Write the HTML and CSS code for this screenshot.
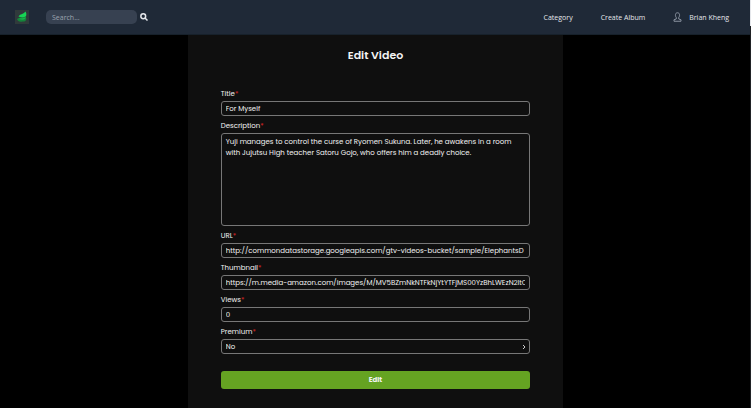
FILE: index.html
```html
<!DOCTYPE html>
<html lang="en">
<head>
<meta charset="utf-8">
<title>Edit Video</title>
<link rel="stylesheet" href="styles.css">
</head>
<body>
<header class="navbar">
  <a class="logo" href="#" aria-label="Home">
    <svg viewBox="0 0 28 28" aria-hidden="true">
      <rect width="28" height="28" fill="#303a3b"/>
      <path d="M7 13C10 8 16 9 21 3C24 8 23 14 18 15C13 16 10 14 7 13Z" fill="#16d655"/>
      <path d="M4 19C8 13 14 17 21 13C25 19 21 24 15 23C9 25 6 22 4 19Z" fill="#14853b"/>
      <path d="M8 18C12 15 17 18 21 14C22 19 16 21 8 18Z" fill="#19b34a"/>
    </svg>
  </a>
  <form class="search">
    <input class="search-input" type="search" placeholder="Search..." aria-label="Search">
    <button class="search-button" type="button" aria-label="Search">
      <svg viewBox="0 0 16 16" aria-hidden="true"><circle cx="6.5" cy="6.5" r="4.8"/><path d="M10 10L15 15"/></svg>
    </button>
  </form>
  <nav class="links">
    <a href="#">Category</a>
    <a href="#">Create Album</a>
    <a class="user" href="#">
      <svg viewBox="0 0 18 20" aria-hidden="true"><path d="M6.500 11C4 8 4 1.500 9 1.500S14 8 11.500 11V14L16 15.500V18.500H2V15.500L6.500 14Z"/></svg>
      Brian Kheng
    </a>
  </nav>
</header>
<main class="panel">
  <h1>Edit Video</h1>
  <form class="form">
    <label for="title">Title<span>*</span></label>
    <input id="title" type="text" value="For Myself">
    <label for="description">Description<span>*</span></label>
    <textarea id="description">Yuji manages to control the curse of Ryomen Sukuna. Later, he awakens in a room with Jujutsu High teacher Satoru Gojo, who offers him a deadly choice.</textarea>
    <label for="url">URL<span>*</span></label>
    <input id="url" type="text" value="http://commondatastorage.googleapis.com/gtv-videos-bucket/sample/ElephantsD">
    <label for="thumbnail">Thumbnail<span>*</span></label>
    <input id="thumbnail" type="text" value="https://m.media-amazon.com/images/M/MV5BZmNkNTFkNjYtYTFjMS00YzBhLWEzN2ItOG">
    <label for="views">Views<span>*</span></label>
    <input id="views" type="text" value="0">
    <label for="premium">Premium<span>*</span></label>
    <div class="select">
      <select id="premium"><option>No</option><option>Yes</option></select>
      <svg viewBox="0 0 4 6" aria-hidden="true"><path d="M1 1L3 3L1 5"/></svg>
    </div>
    <button class="submit" type="button">Edit</button>
  </form>
</main>
</body>
</html>
```
FILE: styles.css
```css
* { box-sizing: border-box; }

body {
  margin: 0;
  min-height: 100vh;
  display: flex;
  flex-direction: column;
  background: #000;
  color: #f3f3f3;
  font-family: Poppins, Inter, sans-serif;
  font-size: 7px;
}

/* Thin scroll indicator along the window edge */
body::after {
  content: "";
  position: fixed;
  top: 0;
  right: 0;
  width: 1px;
  height: 100%;
  background: linear-gradient(#e5e7eb 26px, #202225 26px);
}

input, textarea, select, button {
  margin: 0;
  color: inherit;
  font: inherit;
}

.navbar {
  display: flex;
  align-items: center;
  height: 35px;
  padding: 0 22px 0 15px;
  background: #1f2937;
  border-bottom: 1px solid #17212b;
  font-family: "Open Sans", sans-serif;
}

.logo svg { display: block; width: 14px; height: 14px; }

.search {
  display: flex;
  align-items: center;
  gap: 3px;
  margin-left: 17px;
}

.search-input {
  width: 91px;
  height: 14px;
  padding: 0 6px;
  border: 0;
  border-radius: 5px;
  background: #374151;
}

.search-input::placeholder { color: #9ca3af; opacity: 1; }

.search-button { padding: 0; border: 0; background: none; }

.search-button svg {
  display: block;
  width: 8px;
  height: 8px;
  fill: none;
  stroke: #e5e7eb;
  stroke-width: 3;
}

.links {
  display: flex;
  align-items: center;
  gap: 28px;
  margin-left: auto;
}

.links a { color: #e5e7eb; text-decoration: none; }

.links .user { display: flex; align-items: center; gap: 7px; }

.user svg {
  width: 9px;
  height: 10px;
  fill: none;
  stroke: #8a93a0;
  stroke-width: 2;
}

.panel {
  flex: 1;
  width: 50%;
  margin: 0 auto;
  padding: 12px 33px 20px;
  background: #0f0f0f;
}

h1 {
  margin: 0 0 20px;
  font-size: 11px;
  font-weight: 600;
  line-height: 17px;
  text-align: center;
}

.form { display: flex; flex-direction: column; }

.form label { padding: 4px 0 2px; line-height: 11px; }

.form label span { color: #dc2626; }

.form input, .form textarea, .form select {
  display: block;
  width: 100%;
  height: 15px;
  padding: 0 4px;
  border: 1px solid #777;
  border-radius: 3px;
  background: #0f0f0f;
}

.form textarea {
  height: 93px;
  padding-top: 2px;
  line-height: 11px;
  resize: none;
}

.form select { appearance: none; }

.select { position: relative; }

.select svg {
  position: absolute;
  top: 5px;
  right: 4px;
  width: 4px;
  height: 6px;
  fill: none;
  stroke: #ccc;
  pointer-events: none;
}

.submit {
  height: 18px;
  margin-top: 17px;
  padding: 0;
  border: 0;
  border-radius: 3px;
  background: #65a322;
  font-weight: 700;
}
```
